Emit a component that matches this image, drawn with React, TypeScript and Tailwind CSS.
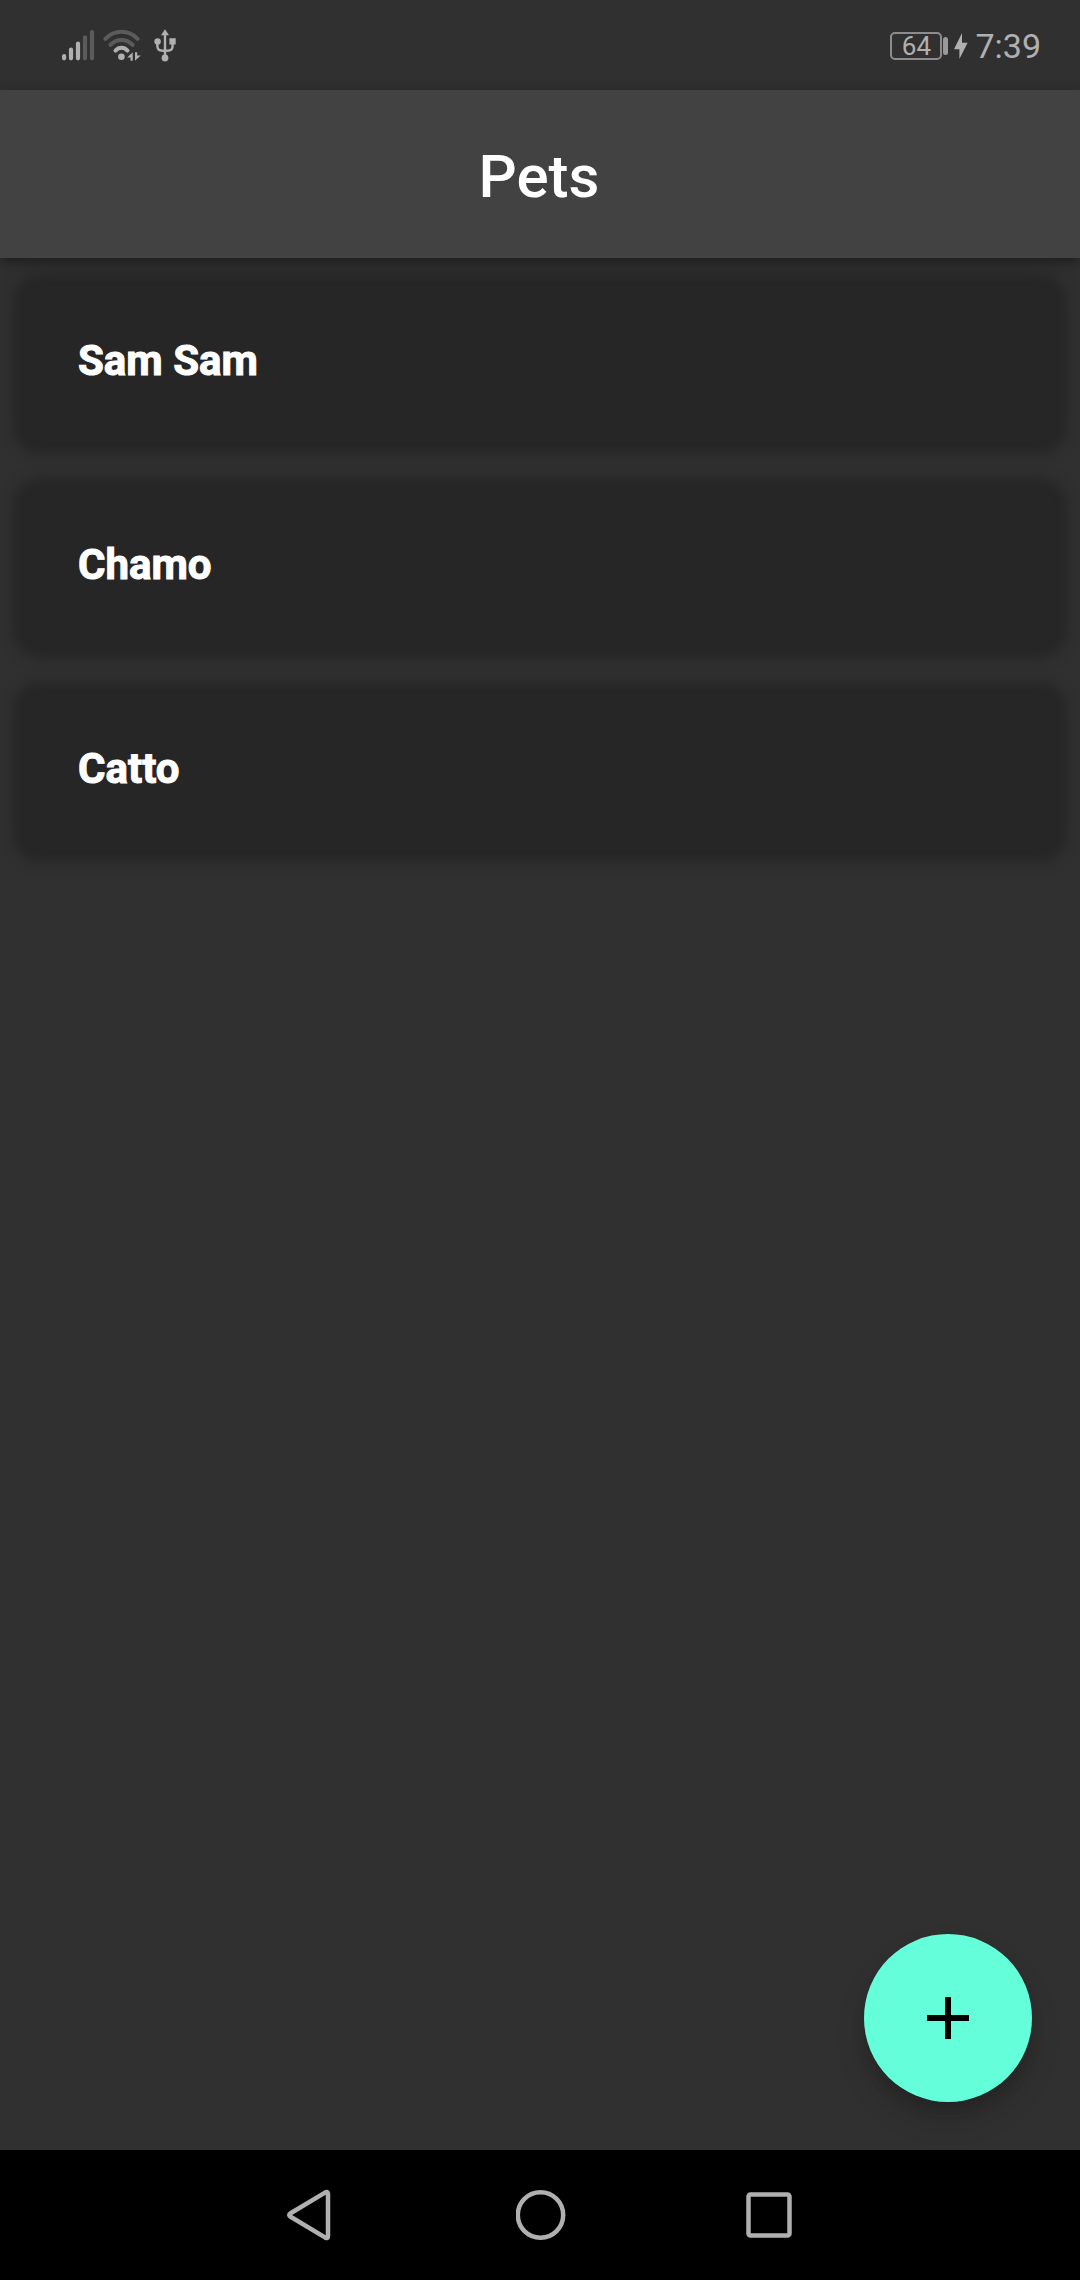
const pets = ["Sam Sam", "Chamo", "Catto"];

function SignalIcon() {
  return (
    <svg width="33" height="32" viewBox="0 0 33 32" strokeWidth="4.2" strokeLinecap="round" stroke="#b0b0b0">
      <path d="M2.1 27v2.300M9 20.500v8.800M16 14.500v14.800" />
      <path d="M23 8.300v21M30 3v26.300" stroke="#5b5b5b" />
    </svg>
  );
}

function WifiIcon() {
  return (
    <svg width="38" height="32" viewBox="0 0 38 32" fill="none" strokeWidth="4" strokeLinecap="round">
      <path d="M2.400 9.800C11.500.400 25.500.400 34.600 9.800" stroke="#5b5b5b" />
      <path d="M7.400 15.800C14 9.400 23 9.400 29.600 15.800" stroke="#5b5b5b" />
      <path d="M12.500 21.600C16 17.800 21 17.800 24.500 21.600" stroke="#b0b0b0" />
      <circle cx="18.400" cy="27.700" r="3.300" fill="#b0b0b0" />
      <path d="M29.700 23.300v8.400h-2.200v-3.300h-3.300zM32 23.300h2.200v3.300h3.600L32 31.700z" fill="#b0b0b0" />
    </svg>
  );
}

function UsbIcon() {
  return (
    <svg width="22" height="33" viewBox="0 0 22 33" fill="none" stroke="#b0b0b0" strokeWidth="2.4">
      <path d="M11 5v24M3.4 13v4.2q0 3.800 3.800 4.300l3.800.4 3.800-.4q3.800-.5 3.800-4.300V13" />
      <path d="M11 .3l4 6H7z" fill="#b0b0b0" stroke="none" />
      <circle cx="3.6" cy="12.400" r="3.200" fill="#b0b0b0" stroke="none" />
      <path d="M15.400 9.200h6.300v6.300h-6.300z" fill="#b0b0b0" stroke="none" />
      <circle cx="11" cy="29" r="3.400" fill="#b0b0b0" stroke="none" />
    </svg>
  );
}

function StatusBar() {
  return (
    <header className="flex h-[90px] shrink-0 items-center justify-between bg-[#303030] pr-[39px] pl-[62px] text-[#b0b0b0]">
      <div className="flex items-center">
        <SignalIcon />
        <div className="ml-2">
          <WifiIcon />
        </div>
        <div className="ml-[13px]">
          <UsbIcon />
        </div>
      </div>
      <div className="flex items-center pt-px">
        <div className="flex h-[28px] w-[52px] items-center justify-center rounded-[5px] border-2 border-[#8c8c8c] text-[26px] leading-none">
          64
        </div>
        <div className="ml-px h-[18px] w-[5px] rounded-full bg-[#9a9a9a]" />
        <svg className="ml-[6px]" width="14" height="26" viewBox="0 0 14 26" fill="#b0b0b0">
          <path d="M8 0v9.800h5.600L5.400 26v-9.800H0z" />
        </svg>
        <span className="ml-[7px] pt-px text-[34px] leading-none">7:39</span>
      </div>
    </header>
  );
}

function PetCard({ name }: { name: string }) {
  return (
    <li className="h-[158px] rounded-[16px] bg-[#262626] pt-[52px] pl-[54px] text-[42px] leading-[48px] font-bold text-white shadow-[0_0_12px_11px_#262626] [-webkit-text-stroke:1px_white]">
      {name}
    </li>
  );
}

function NavigationBar() {
  return (
    <nav className="flex h-[130px] shrink-0 items-center justify-between bg-black pr-[286px] pl-[285px]">
      <svg width="50" height="54" viewBox="0 0 50 54" fill="none" stroke="#b0b0b0" strokeWidth="4.5" strokeLinejoin="round">
        <path d="M5.600 25.200L40 4.600q3-1.600 3 1.200v42.400q0 2.800-3 1.200L5.600 28.800q-2.800-1.800 0-3.600z" />
      </svg>
      <svg width="50" height="54" viewBox="0 0 50 54" fill="none" stroke="#b0b0b0" strokeWidth="4.5">
        <circle cx="24.500" cy="27" r="22.700" />
      </svg>
      <svg width="48" height="54" viewBox="0 0 48 54" fill="none" stroke="#b0b0b0" strokeWidth="4.5">
        <rect x="2.500" y="6.500" width="41" height="41" rx="2" />
      </svg>
    </nav>
  );
}

export default function App() {
  return (
    <div className="relative flex h-[2280px] w-[1080px] flex-col overflow-hidden bg-[#303030] font-['Roboto',sans-serif]">
      <StatusBar />
      <div className="relative z-10 flex h-[168px] shrink-0 items-center justify-center bg-[#424242] pt-[6px] pr-[2px] text-[60px] leading-none font-medium text-white shadow-[0_4px_12px_rgba(0,0,0,0.4)]">
        <h1>Pets</h1>
      </div>
      <main className="flex-1 px-6 pt-[27px]">
        <ul className="flex flex-col gap-[46px]">
          {pets.map((name) => (
            <PetCard key={name} name={name} />
          ))}
        </ul>
      </main>
      <button
        aria-label="Add pet"
        className="absolute right-12 bottom-[178px] flex size-[168px] items-center justify-center rounded-full bg-[#64ffda] shadow-[0_9px_15px_-3px_rgba(0,0,0,0.15),0_18px_30px_rgba(0,0,0,0.14)]"
      >
        <svg width="42" height="42" viewBox="0 0 42 42">
          <path d="M18 0h6v18h18v6H24v18h-6V24H0v-6h18z" />
        </svg>
      </button>
      <NavigationBar />
    </div>
  );
}
